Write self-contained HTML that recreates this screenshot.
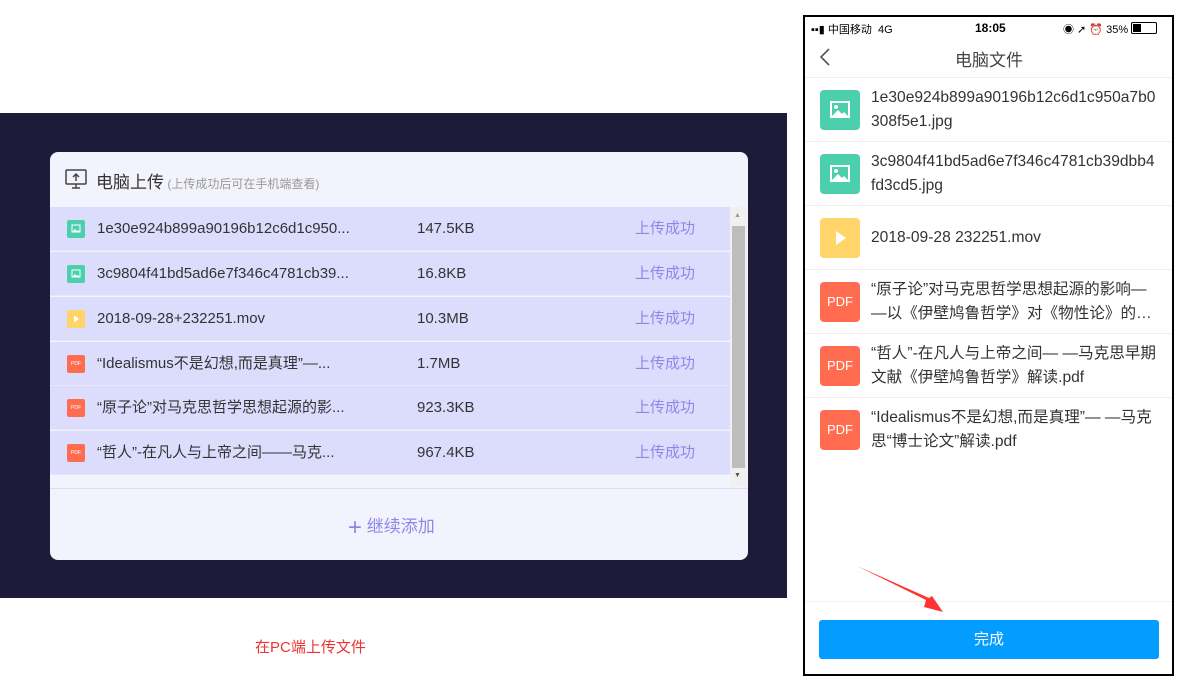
<!DOCTYPE html>
<html><head><meta charset="utf-8"><style>
*{margin:0;padding:0;box-sizing:border-box}
body{width:1189px;height:700px;background:#fff;position:relative;overflow:hidden;font-family:"Liberation Sans","Noto Sans CJK SC",sans-serif;}
.a{position:absolute}
.dark{left:0;top:113px;width:787px;height:485px;background:#1d1b38}
.card{left:50px;top:152px;width:698px;height:408px;background:#f3f3fd;border-radius:8px;overflow:hidden}
.row{position:absolute;left:0;width:680px;height:44px;background:#dcdcfd;border-bottom:1px solid #e8e8fb;font-size:15px;color:#333;line-height:44px}
.row .ic{position:absolute;left:17px;top:13px;width:18px;height:18px;border-radius:2px}
.row .n{position:absolute;left:47px;top:0;white-space:nowrap}
.row .s{position:absolute;left:367px;top:0}
.row .st{position:absolute;left:585px;top:0;color:#8d88e8}
.g{background:#4ccfac}.y{background:#ffd56a}.p{background:#ff6c4f;color:#fff;font-size:5px;text-align:center;line-height:18px!important}
.ic svg{position:absolute;left:0;top:0;width:100%;height:100%}
.phone{left:803px;top:15px;width:371px;height:661px;border:2px solid #000;background:#fff}
.pr{position:absolute;left:0;width:367px;height:64px;border-bottom:1px solid #eee;font-size:15.6px;color:#333;line-height:24px}
.pr .ic{position:absolute;left:15px;top:12px;width:40px;height:40px;border-radius:4px}
.pr .t{position:absolute;left:66px;top:8px;white-space:nowrap}
.pdf{background:#ff6c4f;color:#fff;font-size:13px;text-align:center;line-height:40px}
</style></head><body>
<div class="a dark"></div>
<div class="a card">
 <svg class="a" style="left:15px;top:16px" width="22" height="22" viewBox="0 0 22 22" fill="none" stroke="#444" stroke-width="1.5"><rect x="1" y="2" width="20" height="14" rx="1"/><path d="M7 20h8M11 16v4M11 13V6M8 9l3-3 3 3"/></svg>
 <div class="a" style="left:46px;top:16px;font-size:17px;color:#333">电脑上传<span style="font-size:12px;color:#999"> (上传成功后可在手机端查看)</span></div>
 <div class="row" style="top:55px"><div class="ic g"><svg viewBox="0 0 18 18"><rect x="5" y="5" width="8" height="7" fill="none" stroke="#fff" stroke-width="1"/><path d="M5.5 11.5l2.5-2.5 2 2 1-1 1.5 1.5z" fill="#fff"/></svg></div><div class="n">1e30e924b899a90196b12c6d1c950...</div><div class="s">147.5KB</div><div class="st">上传成功</div></div>
 <div class="row" style="top:100px"><div class="ic g"><svg viewBox="0 0 18 18"><rect x="5" y="5" width="8" height="7" fill="none" stroke="#fff" stroke-width="1"/><path d="M5.5 11.5l2.5-2.5 2 2 1-1 1.5 1.5z" fill="#fff"/></svg></div><div class="n">3c9804f41bd5ad6e7f346c4781cb39...</div><div class="s">16.8KB</div><div class="st">上传成功</div></div>
 <div class="row" style="top:145px"><div class="ic y"><svg viewBox="0 0 18 18"><path d="M7 5.5l5 3.5-5 3.5z" fill="#fff"/></svg></div><div class="n">2018-09-28+232251.mov</div><div class="s">10.3MB</div><div class="st">上传成功</div></div>
 <div class="row" style="top:190px"><div class="ic p">PDF</div><div class="n">“Idealismus不是幻想,而是真理”—...</div><div class="s">1.7MB</div><div class="st">上传成功</div></div>
 <div class="row" style="top:234px"><div class="ic p">PDF</div><div class="n">“原子论”对马克思哲学思想起源的影...</div><div class="s">923.3KB</div><div class="st">上传成功</div></div>
 <div class="row" style="top:279px"><div class="ic p">PDF</div><div class="n">“哲人”-在凡人与上帝之间——马克...</div><div class="s">967.4KB</div><div class="st">上传成功</div></div>
 <div class="a" style="left:680px;top:55px;width:17px;height:280px;background:#f0f0f0"></div>
 <div class="a" style="left:682px;top:74px;width:13px;height:242px;background:#bdbdbd"></div>
 <div class="a" style="left:684px;top:60px;font-size:7px;color:#999">▲</div>
 <div class="a" style="left:684px;top:320px;font-size:7px;color:#555">▼</div>
 <div class="a" style="left:0;top:336px;width:698px;height:1px;background:#dedee8"></div>
 <div class="a" style="left:298px;top:360px;font-size:17px;color:#8d88e8"><span style="font-size:24px;font-weight:300;vertical-align:-3px">+</span> 继续添加</div>
</div>
<div class="a" style="left:255px;top:636px;font-size:15px;color:#e33">在PC端上传文件</div>
<div class="a phone">
 <div class="a" style="left:6px;top:4px;font-size:11px;color:#000">▪▪▮ 中国移动&nbsp; 4G</div>
 <div class="a" style="left:170px;top:4px;font-size:12px;font-weight:bold">18:05</div>
 <div class="a" style="left:258px;top:4px;font-size:11px">◉ ➚ ⏰ 35%</div>
 <div class="a" style="left:326px;top:5px;width:26px;height:12px;border:1px solid #000;border-radius:2px"><div style="width:8px;height:8px;margin:1px;background:#000"></div></div>
 <svg class="a" style="left:14px;top:30px" width="12" height="20"><path d="M10 2L2 10l8 8" stroke="#555" stroke-width="1.6" fill="none"/></svg>
 <div class="a" style="left:150px;top:29px;font-size:17px;color:#444">电脑文件</div>
 <div class="a" style="left:0;top:60px;width:367px;height:1px;background:#eee"></div>
 <div class="pr" style="top:61px"><div class="ic g"><svg viewBox="0 0 40 40"><rect x="11" y="12" width="18" height="15" fill="none" stroke="#fff" stroke-width="2"/><circle cx="16" cy="17" r="2" fill="#fff"/><path d="M12 26l6-6 4 4 2-2 4 4z" fill="#fff"/></svg></div><div class="t">1e30e924b899a90196b12c6d1c950a7b0<br>308f5e1.jpg</div></div>
 <div class="pr" style="top:125px"><div class="ic g"><svg viewBox="0 0 40 40"><rect x="11" y="12" width="18" height="15" fill="none" stroke="#fff" stroke-width="2"/><circle cx="16" cy="17" r="2" fill="#fff"/><path d="M12 26l6-6 4 4 2-2 4 4z" fill="#fff"/></svg></div><div class="t">3c9804f41bd5ad6e7f346c4781cb39dbb4<br>fd3cd5.jpg</div></div>
 <div class="pr" style="top:189px"><div class="ic y"><svg viewBox="0 0 40 40"><path d="M16 13l10 7-10 7z" fill="#fff"/></svg></div><div class="t" style="top:20px">2018-09-28 232251.mov</div></div>
 <div class="pr" style="top:253px"><div class="ic pdf">PDF</div><div class="t">“原子论”对马克思哲学思想起源的影响—<br>—以《伊壁鸠鲁哲学》对《物性论》的…</div></div>
 <div class="pr" style="top:317px"><div class="ic pdf">PDF</div><div class="t">“哲人”-在凡人与上帝之间— —马克思早期<br>文献《伊壁鸠鲁哲学》解读.pdf</div></div>
 <div class="pr" style="top:381px;border:none"><div class="ic pdf">PDF</div><div class="t">“Idealismus不是幻想,而是真理”— —马克<br>思“博士论文”解读.pdf</div></div>
 <div class="a" style="left:0;top:584px;width:367px;height:1px;background:#f2f2f2"></div>
 <div class="a" style="left:14px;top:603px;width:340px;height:39px;background:#039cff;border-radius:3px;color:#fff;font-size:15px;text-align:center;line-height:39px">完成</div>
</div>
<svg class="a" style="left:850px;top:560px" width="100" height="60"><path d="M7 6L76 40L74 47L93 52L82 36L79 38Z" fill="#f33"/></svg>
</body></html>
